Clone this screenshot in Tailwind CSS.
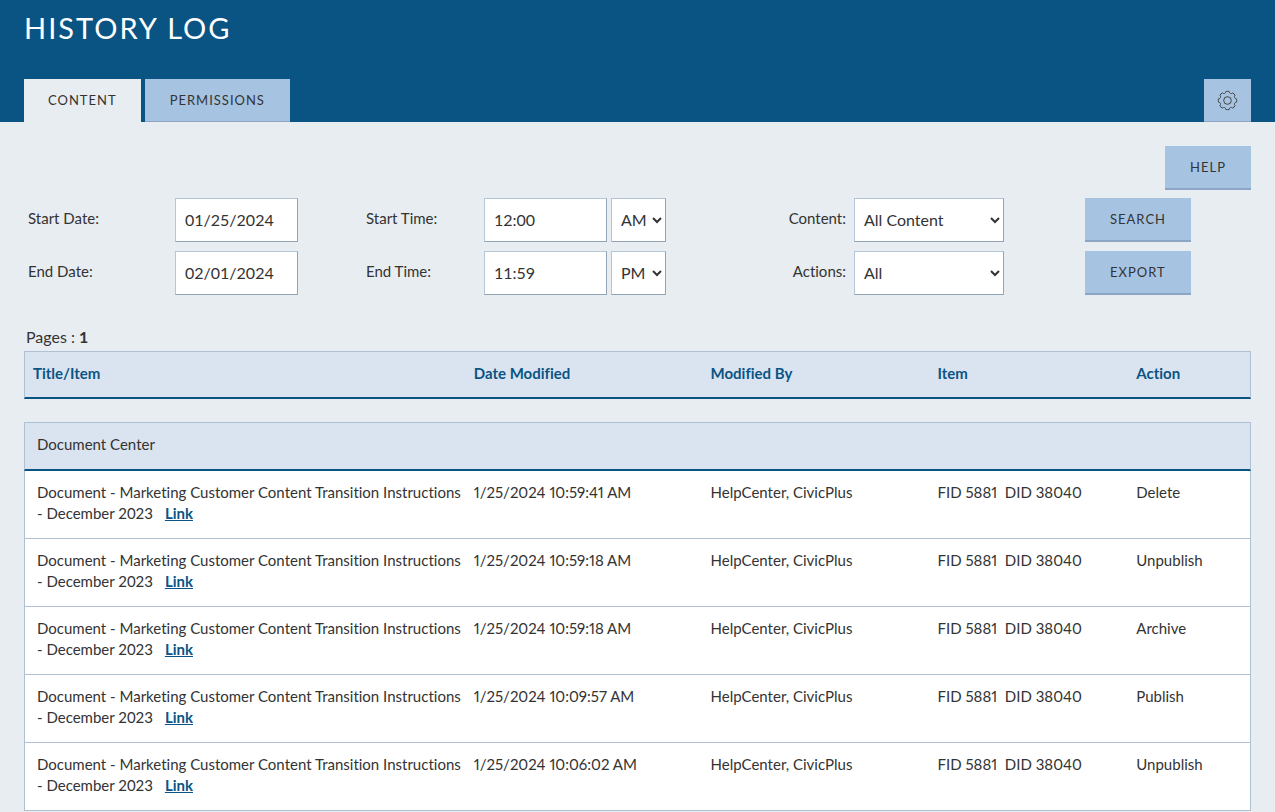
<!DOCTYPE html>
<html lang="en">
<head>
  <meta charset="UTF-8" />
  <meta name="viewport" content="width=device-width, initial-scale=1.0"/>
  <title>History Log</title>
  <script src="https://cdn.jsdelivr.net/npm/@tailwindcss/browser@4"></script>
</head>
<body class="bg-[#e8edf1] text-[#333] font-[Lato,sans-serif] text-[15px] leading-[21px] [font-variant-ligatures:none] overflow-x-hidden">

  <!-- Header -->
  <header class="bg-[#0a5484] px-6 pt-2">
    <h1 class="text-white text-[29px] leading-10 tracking-[2px]">HISTORY LOG</h1>
    <nav class="flex items-end gap-1 pt-[31px] text-[13px] tracking-[1px]">
      <a href="#content" class="h-[43px] px-6 flex items-center bg-[#e8edf1]">CONTENT</a>
      <a href="#permissions" class="h-[43px] px-[25px] flex items-center bg-[#a7c3e2] border-b border-[#8aa6c4]">PERMISSIONS</a>
      <button type="button" aria-label="Settings" class="ml-auto w-[47px] h-[43px] flex items-center justify-center bg-[#a7c3e2] border-b border-[#8aa6c4]">
        <svg class="w-[21px] h-[21px]" viewBox="-10.5 -10.5 21 21" fill="none" stroke="#444" stroke-width="1" stroke-linejoin="round">
          <circle r="3.8"/>
          <path d="M-1.6-9.06Q0-9.4 1.6-9.06Q2.37-5.73 5.28-7.54Q6.7-6.7 7.54-5.28Q5.73-2.37 9.06-1.6Q9.4 0 9.06 1.6Q5.73 2.37 7.54 5.28Q6.7 6.7 5.28 7.54Q2.37 5.73 1.6 9.06Q0 9.4-1.6 9.06Q-2.37 5.73-5.28 7.54Q-6.7 6.7-7.54 5.28Q-5.73 2.37-9.06 1.6Q-9.4 0-9.06-1.6Q-5.73-2.37-7.54-5.28Q-6.7-6.7-5.28-7.54Q-2.37-5.73-1.6-9.06z"/>
        </svg>
      </button>
    </nav>
  </header>

  <main class="px-6 pt-6">
    <div class="flex justify-end">
      <button type="button" class="h-11 px-[25px] bg-[#a7c3e2] border-b-2 border-[#8aa6c4] text-[13px] tracking-[1px]">HELP</button>
    </div>

    <!-- Filters -->
    <form class="mt-2 grid grid-cols-[151fr_191fr_118fr_300fr_70fr_231fr_166fr] gap-y-[9px] items-center">
      <label for="start-date" class="pl-1 pb-1">Start Date:</label>
      <div><input id="start-date" type="text" value="01/25/2024" class="block w-[123px] h-11 px-[9px] pb-[2px] bg-white border border-t-[#b5c6d8] border-l-[#b5c6d8] border-r-[#93a4b6] border-b-[#93a4b6] text-base"/></div>
      <label for="start-time" class="pb-1">Start Time:</label>
      <div class="flex gap-1">
        <input id="start-time" type="text" value="12:00" class="w-[123px] h-11 px-[9px] pb-[2px] bg-white border border-t-[#b5c6d8] border-l-[#b5c6d8] border-r-[#93a4b6] border-b-[#93a4b6] text-base"/>
        <select aria-label="Start time AM or PM" class="w-[55px] h-11 pl-[5px] pb-[2px] bg-white border border-t-[#b5c6d8] border-l-[#b5c6d8] border-r-[#93a4b6] border-b-[#93a4b6] text-base">
          <option selected>AM</option>
          <option>PM</option>
        </select>
      </div>
      <label for="content-type" class="pr-2 pb-1 text-right">Content:</label>
      <div>
        <select id="content-type" class="block w-[150px] h-11 pl-[5px] pb-[2px] bg-white border border-t-[#b5c6d8] border-l-[#b5c6d8] border-r-[#93a4b6] border-b-[#93a4b6] text-base">
          <option>All Content</option>
        </select>
      </div>
      <div><button type="button" class="block h-11 px-[25px] bg-[#a7c3e2] border-b-2 border-[#8aa6c4] text-[13px] tracking-[1px]">SEARCH</button></div>

      <label for="end-date" class="pl-1 pb-1">End Date:</label>
      <div><input id="end-date" type="text" value="02/01/2024" class="block w-[123px] h-11 px-[9px] pb-[2px] bg-white border border-t-[#b5c6d8] border-l-[#b5c6d8] border-r-[#93a4b6] border-b-[#93a4b6] text-base"/></div>
      <label for="end-time" class="pb-1">End Time:</label>
      <div class="flex gap-1">
        <input id="end-time" type="text" value="11:59" class="w-[123px] h-11 px-[9px] pb-[2px] bg-white border border-t-[#b5c6d8] border-l-[#b5c6d8] border-r-[#93a4b6] border-b-[#93a4b6] text-base"/>
        <select aria-label="End time AM or PM" class="w-[55px] h-11 pl-[5px] pb-[2px] bg-white border border-t-[#b5c6d8] border-l-[#b5c6d8] border-r-[#93a4b6] border-b-[#93a4b6] text-base">
          <option>AM</option>
          <option selected>PM</option>
        </select>
      </div>
      <label for="action-type" class="pr-2 pb-1 text-right">Actions:</label>
      <div>
        <select id="action-type" class="block w-[150px] h-11 pl-[5px] pb-[2px] bg-white border border-t-[#b5c6d8] border-l-[#b5c6d8] border-r-[#93a4b6] border-b-[#93a4b6] text-base">
          <option>All</option>
        </select>
      </div>
      <div><button type="button" class="block h-11 px-[25px] bg-[#a7c3e2] border-b-2 border-[#8aa6c4] text-[13px] tracking-[1px]">EXPORT</button></div>
    </form>

    <p class="mt-[30px] mb-[2px] pl-[2px] text-base">Pages : <b>1</b></p>

    <!-- Log -->
    <table class="w-full table-fixed border-separate border-spacing-0">
      <colgroup>
        <col class="w-[36%]"/>
        <col class="w-[19.3%]"/>
        <col class="w-[18.5%]"/>
        <col class="w-[16.2%]"/>
        <col class="w-[10%]"/>
      </colgroup>
      <thead class="text-left text-[#0a5484]">
        <tr class="h-12 bg-[#dae4f0]">
          <th class="px-2 pb-[2px] border-t border-l border-t-[#b0c0d3] border-l-[#b0c0d3] border-b-2 border-b-[#0a5484]">Title/Item</th>
          <th class="px-2 pb-[2px] border-t border-t-[#b0c0d3] border-b-2 border-b-[#0a5484]">Date Modified</th>
          <th class="px-2 pb-[2px] border-t border-t-[#b0c0d3] border-b-2 border-b-[#0a5484]">Modified By</th>
          <th class="px-2 pb-[2px] border-t border-t-[#b0c0d3] border-b-2 border-b-[#0a5484]">Item</th>
          <th class="px-2 pb-[2px] border-t border-r border-t-[#b0c0d3] border-r-[#b0c0d3] border-b-2 border-b-[#0a5484]">Action</th>
        </tr>
        <tr aria-hidden="true"><td colspan="5" class="h-[23px]"></td></tr>
      </thead>
      <tbody id="log-rows">
        <tr class="h-[49px] bg-[#dae4f0]">
          <td colspan="5" class="px-3 pb-1 border-t border-x border-t-[#b0c0d3] border-x-[#b0c0d3] border-b-2 border-b-[#0a5484]">Document Center</td>
        </tr>
      </tbody>
    </table>
  </main>

  <script>
    const entries = [
      { date: "1/25/2024 10:59:41 AM", action: "Delete" },
      { date: "1/25/2024 10:59:18 AM", action: "Unpublish" },
      { date: "1/25/2024 10:59:18 AM", action: "Archive" },
      { date: "1/25/2024 10:09:57 AM", action: "Publish" },
      { date: "1/25/2024 10:06:02 AM", action: "Unpublish" }
    ];

    const logRows = document.getElementById("log-rows");

    entries.forEach((entry) => {
      const row = document.createElement("tr");
      row.className = "h-[68px] bg-white align-top";
      row.innerHTML = `
        <td class="pl-3 pr-1 py-[11px] border-b border-l border-[#b0c0d3]">Document - Marketing Customer Content Transition Instructions - December 2023 <a href="#" class="ml-2 font-bold underline text-[#0a5484]">Link</a></td>
        <td class="px-2 py-[11px] border-b border-[#b0c0d3] proportional-nums">${entry.date}</td>
        <td class="px-2 py-[11px] border-b border-[#b0c0d3]">HelpCenter, CivicPlus</td>
        <td class="px-2 py-[11px] border-b border-[#b0c0d3] proportional-nums">FID 5881&nbsp; DID 38040</td>
        <td class="px-2 py-[11px] border-b border-r border-[#b0c0d3]">${entry.action}</td>`;
      logRows.appendChild(row);
    });
  </script>
</body>
</html>
